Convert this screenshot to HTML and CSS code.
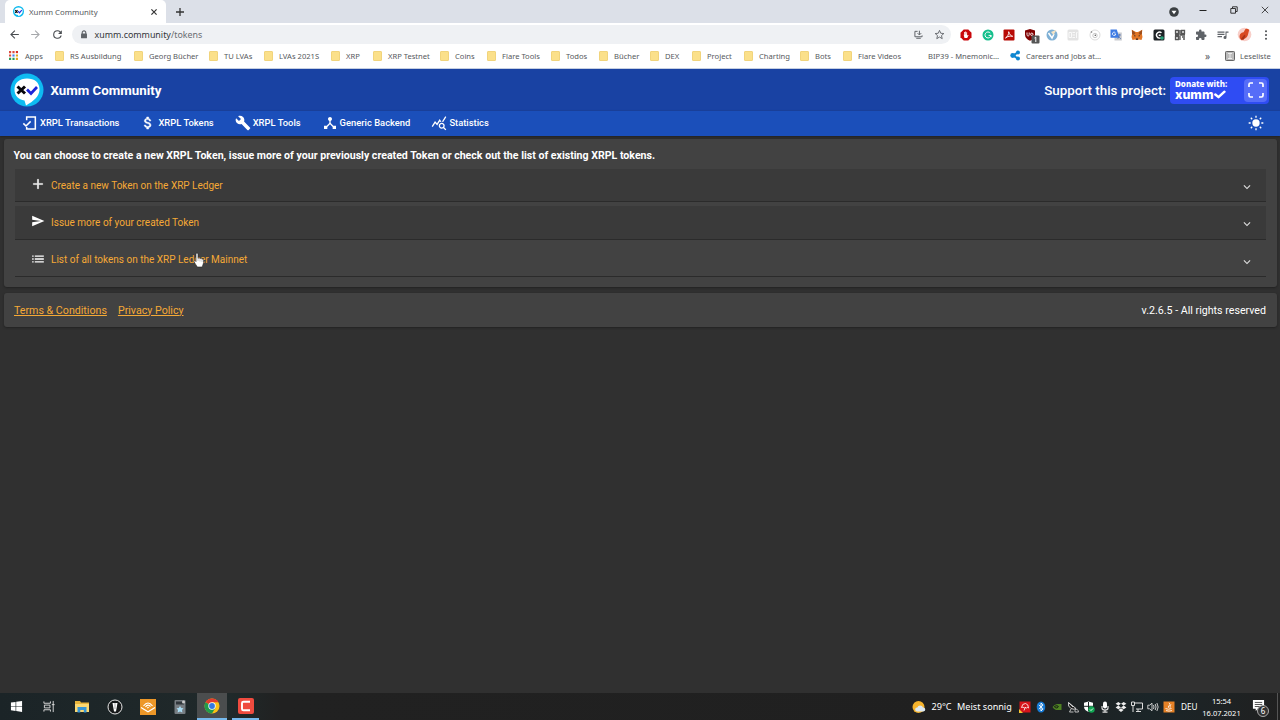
FILE: index.html
```html
<!DOCTYPE html>
<html lang="de">
<head>
    <meta charset="UTF-8">
    <meta name="viewport" content="width=device-width, initial-scale=1.0">
    <title>Xumm Community</title>
    <link rel="stylesheet" href="styles.css">
</head>
<body>
    <div class="tab-strip">
        <div class="tab">
            <svg class="favicon" viewBox="0 0 34 34"><circle cx="17" cy="17" r="17" fill="#0cb9ee"/><path d="M17 5c8 0 13 4 13 11 0 8-6 12-14 16v-4C9 27 4 24 4 16 4 9 9 5 17 5z" fill="#fff"/><path d="M7 13l7 8m0-8l-7 8" stroke="#000" stroke-width="3.5"/><path d="M16 16l4 5 7-8" fill="none" stroke="#1a2be0" stroke-width="3.5"/></svg>
            <span class="tab-title">Xumm Community</span>
            <svg class="tab-close" viewBox="0 0 8 8"><path d="M1.4 1.4l5.2 5.2m0-5.2L1.4 6.6" stroke="#333" stroke-width="1.2"/></svg>
        </div>
        <svg class="new-tab" viewBox="0 0 8 8"><path d="M4 0v8M0 4h8" stroke="#333" stroke-width="1.3"/></svg>
        <div class="window-controls">
            <svg class="update-dot" viewBox="0 0 10 10"><circle cx="5" cy="5" r="4.8" fill="#3c4043"/><path d="M2.5 3.7h5L5 7.3z" fill="#fff"/></svg>
            <svg viewBox="0 0 8 8"><path d="M.5 4.5h7" stroke="#222"/></svg>
            <svg viewBox="0 0 8 8"><path d="M2.5 2V.8h4.7v4.7H6M.8 2.5h4.7v4.7H.8z" fill="none" stroke="#222" stroke-width=".9"/></svg>
            <svg viewBox="0 0 8 8"><path d="M.8.8l6.4 6.4m0-6.400L.8 7.2" stroke="#222" stroke-width=".8"/></svg>
        </div>
    </div>

    <div class="toolbar">
        <div class="nav-buttons">
            <svg viewBox="0 0 24 24" fill="#4a4d51"><path d="M20 11H7.830l5.590-5.590L12 4l-8 8 8 8 1.410-1.410L7.830 13H20v-2z"/></svg>
            <svg viewBox="0 0 24 24" fill="#a6a8ab"><path d="M12 4l-1.410 1.410L16.170 11H4v2h12.170l-5.580 5.590L12 20l8-8z"/></svg>
            <svg viewBox="0 0 24 24" fill="#4a4d51"><path d="M17.650 6.350A7.960 7.960 0 0 0 12 4a8 8 0 1 0 7.730 10h-2.080A6 6 0 1 1 12 6c1.660 0 3.140.69 4.220 1.780L13 11h7V4l-2.350 2.350z"/></svg>
        </div>
        <div class="address">
            <svg class="lock" viewBox="0 0 8 10"><path d="M2 4.500V3a2 2 0 0 1 4 0v1.500" fill="none" stroke="#5f6368" stroke-width="1.2"/><rect x=".7" y="4" width="6.6" height="5.3" rx=".8" fill="#5f6368"/></svg>
            <span class="url">xumm.community<span class="url-path">/tokens</span></span>
            <svg class="install" viewBox="0 0 10 10" fill="none" stroke="#5f6368" stroke-width="1.1"><path d="M4 1.500H1v6h8V6M2.500 9.200h5M6 .8v4.500M4 3.500l2 2 2-2"/></svg>
            <svg class="star" viewBox="0 0 24 24"><path d="M12 3l2.700 6.300 6.800.6-5.200 4.500 1.600 6.700-5.900-3.600-5.900 3.600 1.600-6.700L2.500 9.900l6.800-.6z" fill="none" stroke="#5f6368" stroke-width="2"/></svg>
        </div>
        <div class="extensions">
            <svg viewBox="0 0 12 12"><path d="M3.700.5h4.600l3.200 3.200v4.600l-3.200 3.200H3.700L.5 8.300V3.700z" fill="#c9060b"/><path d="M3.600 5.500l.9 3.600h2.700l1.400-3-.8-.2-.7.8V3.200h-.8v2.200h-.2V2.600h-.9v2.800H5V3h-.8v3z" fill="#fff"/></svg>
            <svg viewBox="0 0 12 12"><circle cx="6" cy="6" r="5.5" fill="#15bf8c"/><path d="M8.300 4A3 3 0 1 0 9 6.400H6.600M9 6.200v2" fill="none" stroke="#fff"/></svg>
            <svg viewBox="0 0 12 12"><rect x=".5" y=".5" width="11" height="11" rx="1" fill="#b80a05"/><path d="M2.500 9C4.500 8 6 5 5.700 2.700c1 3 2 4.200 4 4.600C7.500 6.700 4.500 7.300 2.500 9z" fill="none" stroke="#fff" stroke-width=".9"/></svg>
            <svg class="ublock" viewBox="0 0 16 16"><path d="M6 1l5 1.500v4.200c0 3-2 4.600-5 6-3-1.400-5-3-5-6V2.500z" fill="#800000"/><path d="M3 4.500v2c0 2 2.200 2 2.200 0v-2" fill="none" stroke="#fff" stroke-width=".9"/><circle cx="7.8" cy="6.3" r="1.2" fill="none" stroke="#fff" stroke-width=".9"/><rect x="7.5" y="7.5" width="8" height="8" rx="1" fill="#555"/><path d="M10.500 10l1.300-.8V14" fill="none" stroke="#fff" stroke-width="1"/></svg>
            <svg viewBox="0 0 12 12"><circle cx="6" cy="6" r="5.5" fill="#7eb0d5"/><path d="M2.500 4l3.500 5 2-4" fill="none" stroke="#fff" stroke-width="1.5"/><path d="M5 3l5.500-2.200-3 5.200z" fill="#f5e4c5"/></svg>
            <svg viewBox="0 0 12 12"><rect x=".5" y=".5" width="11" height="11" rx="1.5" fill="#e3e3e3"/><path d="M2 3.500h2.500v5H2zM5.500 3.500H8M5.500 6H8M5.500 8.500H8M9.500 9V3.500h1" fill="none" stroke="#f9f9f9"/></svg>
            <svg viewBox="0 0 12 12"><circle cx="6" cy="6" r="5" fill="none" stroke="#dcdcdc"/><circle cx="6" cy="6.5" r="2.2" fill="none" stroke="#bbb" stroke-width=".8"/><circle cx="2.5" cy="3" r=".8" fill="#777"/><circle cx="6.3" cy="6.3" r=".8" fill="#555"/></svg>
            <svg viewBox="0 0 12 12"><rect x="4.5" y="3.5" width="7.3" height="8" fill="#c9cbd0"/><path d="M.5.500h6.300l2.500 8.300H.5z" fill="#3e7be3"/><path d="M5.400 3.700A1.700 1.700 0 1 0 5.800 5H4.300" fill="none" stroke="#fff" stroke-width=".8"/><path d="M8 6h3M9.500 5c0 2-1 4-2 5m1-3q1 2 2.500 3" fill="none" stroke="#4c71b5" stroke-width=".7"/></svg>
            <svg viewBox="0 0 12 12"><path d="M.7.700L5 3h2l4.300-2.300-.4 4.300.6 3-1 3-2.500-.6L6.800 11H5.200L4 10.400l-2.500.6-1-3L1.100 5z" fill="#e27625"/><path d="M3 6l2 1-1.500.6zM9 6L7 7l1.500.6zM5 9.500h2v1.200H5z" fill="#342a28"/><path d="M1 1l3.500 3L3 6 1.100 5zM11 1L7.500 4 9 6l1.900-1z" fill="#9c4d1b"/></svg>
            <svg viewBox="0 0 12 12"><rect x=".5" y=".5" width="11" height="11" rx="1.5" fill="#1e2226"/><path d="M8.500 3.800a3 3 0 1 0-.8 5M5.700 6.200h2" fill="none" stroke="#fff" stroke-width="1.4"/><circle cx="9" cy="9" r="1.8" fill="#26a078"/></svg>
            <svg viewBox="0 0 12 12"><path d="M1.500 1.500h3v3h-3zM7.500 1.500h3v3h-3zM1.500 7.500h3v3h-3zM6 1v5h5M6 7v4M8 8h3M9 10h2M1 6h4" fill="none" stroke="#555" stroke-width="1.3"/></svg>
            <svg viewBox="0 0 24 24" fill="#5f6368"><path d="M20.500 11H19V7c0-1.100-.9-2-2-2h-4V3.500a2.500 2.500 0 0 0-5 0V5H4c-1.100 0-2 .9-2 2v3.800h1.500a2.700 2.700 0 0 1 0 5.400H2V20c0 1.100.9 2 2 2h3.800v-1.500a2.700 2.700 0 0 1 5.400 0V22H17c1.100 0 2-.9 2-2v-4h1.500a2.500 2.500 0 0 0 0-5z"/></svg>
            <svg viewBox="0 0 24 24" fill="#5f6368"><path d="M15 5H1v2.300h14V5zm0 4.500H1v2.300h14V9.500zM1 16.300h9V14H1v2.300zM17 5v9.200a3 3 0 1 0 2 2.800V7.300h4V5h-6z"/></svg>
            <svg class="profile" viewBox="0 0 16 16"><circle cx="8" cy="8" r="7.3" fill="#f8cfc9"/><path d="M3 12c-1-4 1-6 4-6.500l2-3.500q2-.5 4 .8L12 7c-.5 3-2 5-4 5.500L5 14z" fill="#d94a22"/><path d="M4 13l4-5 1 1.500-2 4z" fill="#a83217"/></svg>
            <svg viewBox="0 0 12 12" fill="#4a4d51"><circle cx="6" cy="2.3" r="1"/><circle cx="6" cy="6" r="1"/><circle cx="6" cy="9.7" r="1"/></svg>
        </div>
    </div>

    <div class="bookmarks">
        <div class="bookmark apps"><svg viewBox="0 0 10 10"><path d="M0 0h2.400v2.400H0zM3.800 0h2.400v2.400H3.800zM0 3.800h2.400v2.400H0z" fill="#dd4b3e"/><path d="M7.600 0H10v2.400H7.600z" fill="#d93025"/><path d="M3.800 3.800h2.400v2.400H3.800z" fill="#4285f4"/><path d="M7.600 3.800H10v2.400H7.600zM7.600 7.600H10V10H7.600z" fill="#e2a81c"/><path d="M0 7.600h2.400V10H0zM3.800 7.600h2.400V10H3.800z" fill="#2e9d57"/></svg>Apps</div>
        <div class="bookmark"><i class="folder"></i>RS Ausbildung</div>
        <div class="bookmark"><i class="folder"></i>Georg Bücher</div>
        <div class="bookmark"><i class="folder"></i>TU LVAs</div>
        <div class="bookmark"><i class="folder"></i>LVAs 2021S</div>
        <div class="bookmark"><i class="folder"></i>XRP</div>
        <div class="bookmark"><i class="folder"></i>XRP Testnet</div>
        <div class="bookmark"><i class="folder"></i>Coins</div>
        <div class="bookmark"><i class="folder"></i>Flare Tools</div>
        <div class="bookmark"><i class="folder"></i>Todos</div>
        <div class="bookmark"><i class="folder"></i>Bücher</div>
        <div class="bookmark"><i class="folder"></i>DEX</div>
        <div class="bookmark"><i class="folder"></i>Project</div>
        <div class="bookmark"><i class="folder"></i>Charting</div>
        <div class="bookmark"><i class="folder"></i>Bots</div>
        <div class="bookmark"><i class="folder"></i>Flare Videos</div>
        <div class="bookmark">BIP39 - Mnemonic...</div>
        <div class="bookmark"><svg class="ripple" viewBox="0 0 12 12" fill="#0f87d1"><circle cx="3" cy="6" r="2.7"/><circle cx="8.7" cy="2.7" r="2.2"/><circle cx="8.7" cy="9.3" r="2.2"/><path d="M3 5l5-3v2L6 6l2 2v2L3 7z"/></svg>Careers and Jobs at...</div>
        <div class="bookmark more">»</div>
        <div class="bookmark reading"><svg viewBox="0 0 10 10"><rect x=".5" y=".5" width="9" height="9" rx=".8" fill="#bbb" stroke="#666"/><path d="M3 2.500h4M3 7.500h4M5 2.500v5" stroke="#f2f2f2" stroke-width=".9"/></svg>Leseliste</div>
    </div>

    <header class="site-header">
        <svg class="logo" viewBox="0 0 34 34"><circle cx="17" cy="17" r="16.5" fill="#0ebbf2"/><path d="M17 5.500c7.500 0 12.500 4 12.500 10.700 0 7.300-6 11.800-13.500 16.300l-1.500-5C8.500 26.500 4.500 23 4.500 16.500 4.500 9.500 9.500 5.500 17 5.500z" fill="#fff"/><path d="M7.500 13.500l7.500 7m0-7l-7.500 7" stroke="#05050c" stroke-width="3"/><path d="M17 16.500l4 4 6-6.500" fill="none" stroke="#1c25d8" stroke-width="2.7"/></svg>
        <h1>Xumm Community</h1>
        <span class="support">Support this project:</span>
        <a class="donate">
            <span class="donate-text">
                <span class="donate-label">Donate with:</span>
                <span class="donate-brand">xumm<svg viewBox="0 0 12 9"><path d="M1.300 4.500l3.200 2.700 6-5.500" fill="none" stroke="#fff" stroke-width="2.4" stroke-linecap="round" stroke-linejoin="round"/></svg></span>
            </span>
            <span class="scan"><svg viewBox="0 0 16 16"><path d="M1 5V2.500Q1 1 2.500 1H5M11 1h2.500Q15 1 15 2.500V5M15 11v2.500q0 1.500-1.500 1.500H11M5 15H2.500Q1 15 1 13.500V11" fill="none" stroke="#fff" stroke-width="1.7"/></svg></span>
        </a>
    </header>

    <nav class="site-nav">
        <a><svg viewBox="0 0 24 24"><path d="M7 8V3h13v18H7v-3M2 12.500l4 4 7-7" fill="none" stroke="#fff" stroke-width="2.3"/></svg>XRPL Transactions</a>
        <a><svg viewBox="0 0 24 24"><path d="M11.800 10.900c-2.270-.59-3-1.200-3-2.150 0-1.090 1.010-1.850 2.700-1.850 1.780 0 2.440.85 2.500 2.100h2.210c-.07-1.720-1.120-3.300-3.210-3.810V3h-3v2.160c-1.940.42-3.500 1.680-3.500 3.610 0 2.310 1.910 3.460 4.700 4.130 2.500.6 3 1.480 3 2.410 0 .69-.49 1.790-2.700 1.790-2.060 0-2.870-.92-2.980-2.100h-2.200c.12 2.190 1.760 3.420 3.680 3.830V21h3v-2.150c1.950-.37 3.500-1.500 3.500-3.550 0-2.840-2.430-3.810-4.700-4.400z" stroke="#fff" stroke-width=".7"/></svg>XRPL Tokens</a>
        <a><svg viewBox="0 0 24 24"><path d="M22.700 19l-9.100-9.100c.9-2.300.4-5-1.500-6.900-2-2-5-2.400-7.400-1.300L9 6 6 9 1.600 4.700C.4 7.100.9 10.100 2.900 12.100c1.900 1.900 4.600 2.400 6.900 1.500l9.100 9.100c.4.400 1 .4 1.400 0l2.300-2.300c.5-.4.5-1.100.1-1.400z"/></svg>XRPL Tools</a>
        <a><svg viewBox="0 0 24 24"><path d="M17 16l-4-4V8.820C14.160 8.400 15 7.300 15 6c0-1.660-1.340-3-3-3S9 4.340 9 6c0 1.300.84 2.400 2 2.820V12l-4 4H3v5h5v-3.050l4-4.200 4 4.200V21h5v-5h-4z"/></svg>Generic Backend</a>
        <a><svg viewBox="0 0 24 24"><path d="M19.880 18.470c.44-.7.7-1.510.7-2.390 0-2.490-2.010-4.500-4.500-4.500s-4.500 2.010-4.500 4.500 2.010 4.500 4.490 4.500c.88 0 1.700-.26 2.390-.7L21.580 23 23 21.580l-3.120-3.110zm-3.800.11c-1.380 0-2.500-1.120-2.500-2.500s1.120-2.500 2.500-2.500 2.500 1.120 2.500 2.500-1.120 2.500-2.500 2.500zm-.36-8.500c-.74.02-1.450.18-2.100.45l-.55-.83-3.800 6.180-3.010-3.520-3.630 5.810L1 17l5-8 3 3.500L13 6l2.720 4.080zm2.590.5c-.64-.28-1.330-.45-2.050-.49L21.380 2 23 3.180l-4.690 7.400z"/></svg>Statistics</a>
        <svg class="theme-toggle" viewBox="0 0 24 24"><circle cx="12" cy="12" r="5.5"/><path d="M12 1v3M12 20v3M1 12h3M20 12h3M4.200 4.200l2.100 2.100M17.700 17.700l2.100 2.100M19.800 4.200l-2.100 2.100M6.300 17.700l-2.100 2.100" stroke="#fff" stroke-width="2"/></svg>
    </nav>

    <main class="page">
        <section class="card">
            <h2>You can choose to create a new XRPL Token, issue more of your previously created Token or check out the list of existing XRPL tokens.</h2>
            <div class="panel">
                <svg viewBox="0 0 24 24"><path d="M20 13h-7v7h-2v-7H4v-2h7V4h2v7h7v2z" stroke="#fff" stroke-width=".8"/></svg>
                <span>Create a new Token on the XRP Ledger</span>
                <svg class="chevron" viewBox="0 0 24 24"><path d="M16.590 8.590L12 13.170 7.410 8.590 6 10l6 6 6-6z"/></svg>
            </div>
            <div class="panel">
                <svg viewBox="0 0 24 24"><path d="M2.010 21L23 12 2.010 3 2 10l15 2-15 2z"/></svg>
                <span>Issue more of your created Token</span>
                <svg class="chevron" viewBox="0 0 24 24"><path d="M16.590 8.590L12 13.170 7.410 8.590 6 10l6 6 6-6z"/></svg>
            </div>
            <div class="panel active">
                <svg viewBox="0 0 24 24"><path d="M2 13.200h2.500v-2.400H2v2.400zm0 5h2.500v-2.400H2v2.400zm0-10h2.500V5.800H2v2.400zm4.500 5H22v-2.400H6.500v2.400zm0 5H22v-2.400H6.500v2.400zm0-12.400v2.400H22V5.800H6.500z"/></svg>
                <span>List of all tokens on the XRP Ledger Mainnet</span>
                <svg class="chevron" viewBox="0 0 24 24"><path d="M16.590 8.590L12 13.170 7.410 8.590 6 10l6 6 6-6z"/></svg>
                <svg class="cursor" viewBox="0 0 12 16"><path d="M3 1.500Q4.500.2 5 2v4.200q1.300-.8 2 .3 1.300-.5 1.900.5 1.700-.4 1.700 1.300v2.500L9.200 15H4.300L1 9.800Q.8 8.300 2.200 8.700l.8.900z" fill="#fff" stroke="#222" stroke-width=".6"/><path d="M5 6v3M7 7v2.500M9 7.500V10" stroke="#777" stroke-width=".4"/></svg>
            </div>
        </section>
        <footer class="card site-footer">
            <a>Terms &amp; Conditions</a>
            <a>Privacy Policy</a>
            <span>v.2.6.5 - All rights reserved</span>
        </footer>
    </main>

    <div class="taskbar">
        <div class="task"><svg viewBox="0 0 14 14" fill="#fff"><path d="M1 2.800l5-.7v4.500H1zM6.700 2l6.300-.9v5.500H6.700zM1 7.300h5v4.500l-5-.7zM6.700 7.300H13v5.500l-6.300-.9z"/></svg></div>
        <div class="task"><svg viewBox="0 0 14 14" fill="none" stroke="#ddd"><path d="M1 1.500v2h7v-2M1 12.500v-2h7v2M1.500 5.500h6v3h-6zM11 1v12M9.500 5h3"/></svg></div>
        <div class="task"><svg class="wide" viewBox="0 0 16 14"><path d="M1 1h5l1 1.500h8V12H1z" fill="#e8b43c"/><path d="M1 4h14v8H1z" fill="#fbd872"/><path d="M3.500 7h9v5.500h-2.700V10H6.300v2.500H3.500z" fill="#3795d5"/></svg></div>
        <div class="task"><svg class="wide" viewBox="0 0 16 16"><circle cx="8" cy="8" r="7" fill="#17191a" stroke="#e5e5e5"/><path d="M5.500 4h5L9 12.500H7z" fill="#fff"/><path d="M8 4v6" stroke="#888" stroke-width=".7"/></svg></div>
        <div class="task"><svg class="wide" viewBox="0 0 16 16"><path d="M0 0h16v16H0z" fill="#ed9728"/><path d="M1 8.500l7 4.300 7-4.300M3.500 7Q8 1 12.500 7M5.500 8Q8 4.500 10.500 7.500M7.200 9l1.500-.7" fill="none" stroke="#fff" stroke-width="1.2"/></svg></div>
        <div class="task"><svg class="wide" viewBox="0 0 14 16"><rect x="1.5" y="1" width="11" height="14" rx="1" fill="#777d82"/><path d="M3 2.500h8v3H3z" fill="#30363b"/><circle cx="10.5" cy="3" r="1.5" fill="#ccc"/><path d="M7 7l1.200 2 2.300.3-1.500 1.700.4 2.500L7 12.500l-2.400 1 .4-2.500-1.500-1.700L5.800 9z" fill="#a9dcf3"/></svg></div>
        <div class="task current"><svg class="wide" viewBox="0 0 16 16"><circle cx="8" cy="8" r="7.5" fill="#fbc116"/><path d="M8 8L1.500 4.250A7.500 7.500 0 0 1 14.500 4.250H8z" fill="#e33b2e"/><path d="M1.500 4.250A7.500 7.500 0 0 0 8 15.500l3.300-5.600L8 8z" fill="#229a4b"/><circle cx="8" cy="8" r="3.7" fill="#fff"/><circle cx="8" cy="8" r="2.9" fill="#3479e2"/></svg></div>
        <div class="task running"><svg class="wide" viewBox="0 0 16 16"><rect width="16" height="16" rx="2" fill="#ef4b3f"/><path d="M12 3.700H5.500Q4 3.700 4 5v6q0 1.300 1.500 1.300H12" fill="none" stroke="#fff" stroke-width="1.9"/></svg></div>
        <div class="weather"><svg viewBox="0 0 14 14"><circle cx="6.5" cy="7" r="6" fill="#f5b32c"/><path d="M5 11.500a2 2 0 0 1 .3-4 3 3 0 0 1 5.700 0 2 2 0 0 1 .5 4z" fill="#dce8ef"/></svg><span>29°C</span><span>Meist sonnig</span></div>
        <div class="tray">
            <svg viewBox="0 0 12 12"><path d="M.5.500h11v11H.5z" fill="#d7141a"/><path d="M2.500 6.500Q3 2.500 6.500 2.500q3 .5 3 4.500Q8.500 6 7.500 7 6.500 6 5.500 7 4 5.500 2.500 6.500z" fill="none" stroke="#fff" stroke-width=".8"/><path d="M6.500 6l-1.500 3.500" stroke="#fff" stroke-width=".8"/><path d="M0 12V8l4 4z" fill="#f6c632"/></svg>
            <svg viewBox="0 0 12 12"><ellipse cx="6" cy="6" rx="4.3" ry="5.5" fill="#1679d3"/><path d="M3.800 3.900l4.300 4L6 10V2l2.100 2-4.300 4" fill="none" stroke="#fff" stroke-width=".9"/></svg>
            <svg viewBox="0 0 12 12"><path d="M1.500 6q2-2.500 4.500-3h4.500v6H5Q2.500 8 1.500 6z" fill="#4f8223"/><path d="M3 6q2-2 4-1 1 1-1 2-2 0-2-1" fill="none" stroke="#182313"/></svg>
            <svg viewBox="0 0 12 12"><path d="M1.500 1.500q-1 4 2.500 6 3 1.500 5 0zM1.500 1.500L6 6" fill="#222" stroke="#ddd" stroke-width=".9"/><path d="M4 8l-1.500 3h4M8 8.500q3-1 3.500 2.500H8z" fill="none" stroke="#bbb"/></svg>
            <svg viewBox="0 0 12 12"><path d="M5.500.5l4.500 1.300v4c0 2.700-2 4-4.500 5.200C3 9.800 1 8.500 1 5.800v-4z" fill="#fff"/><path d="M5.500 1v9.500M1 5.300h9" stroke="#1d2425"/><circle cx="8.5" cy="8.5" r="3.2" fill="#11a653"/><path d="M7 8.500l1 1 2-2" fill="none" stroke="#fff" stroke-width=".9"/></svg>
            <svg viewBox="0 0 12 12"><rect x="4" y=".5" width="4" height="7" rx="2" fill="#fff"/><path d="M3 5v2q0 2 3 2t3-2V5M6 9v2.500M3.500 11.200h5" fill="none" stroke="#ddd" stroke-width="1.2"/></svg>
            <svg viewBox="0 0 12 12"><path d="M3.300 1L6 2.800 3.300 4.600.6 2.800zM8.700 1l2.700 1.800-2.700 1.800L6 2.800zM3.300 4.600L6 6.400 3.300 8.200.6 6.400zM8.700 4.600l2.700 1.800-2.700 1.800L6 6.400zM6 7.300l2.600 1.800L6 10.900 3.400 9.100z" fill="#eee"/></svg>
            <svg viewBox="0 0 12 12" fill="none" stroke="#ddd"><path d="M4 2h7.500v6H5M7 8v2.500M5 10.500h5M.5 1h3v3.500h-3zM2 4.500v6.500"/></svg>
            <svg viewBox="0 0 12 12" fill="none" stroke="#ddd" stroke-width=".9"><path d="M.8 4.200h1.800l2.400-2v7.600l-2.400-2H.8zM6.500 4q1 2 0 4M8.200 3q1.700 3 0 6M9.900 2q2.500 4 0 8"/></svg>
            <svg viewBox="0 0 12 12"><path d="M.5.500h11v11H.5z" fill="#e58126"/><path d="M6 1.800q2 1.500 0 3T6.500 7M8 3.500Q6 5 7.500 6.500M2.500 7.500q3 1.500 6 0M3 9.500q3 1.300 6 0" fill="none" stroke="#fff" stroke-width=".8"/></svg>
        </div>
        <span class="language">DEU</span>
        <div class="clock"><span>15:54</span><span>16.07.2021</span></div>
        <div class="notifications"><svg viewBox="0 0 14 14"><path d="M1 1h12v9.500H6.500L4 13v-2.500H1z" fill="#fff"/><path d="M3 3.700h8M3 5.900h8M3 8.100h6" stroke="#333" stroke-width=".9"/></svg><b>6</b></div>
    </div>
</body>
</html>
```
FILE: styles.css
```css
* {
    box-sizing: border-box;
}
body {
    margin: 0;
    width: 1280px;
    height: 720px;
    overflow: hidden;
    display: flex;
    flex-direction: column;
    background-color: #303030;
    color: #ffffff;
    font-family: Roboto, sans-serif;
    white-space: nowrap;
}
svg {
    display: block;
    flex: none;
}

/* Browser window */
.tab-strip, .toolbar, .bookmarks {
    flex: none;
    font-family: "Noto Sans", sans-serif;
    font-size: 7.6px;
    color: #55585c;
}
.tab-strip {
    height: 23px;
    display: flex;
    align-items: center;
    padding-left: 5px;
    background-color: #dce0e8;
}
.tab {
    width: 161px;
    height: 23px;
    padding: 0 8px 0 8px;
    display: flex;
    align-items: center;
    background-color: #ffffff;
    border-radius: 5px 5px 0 0;
}
.favicon {
    width: 11px;
    height: 11px;
}
.tab-title {
    margin-left: 5px;
    flex: 1;
    font-size: 7.8px;
}
.tab-close {
    width: 8px;
    height: 8px;
}
.new-tab {
    width: 8px;
    height: 8px;
    margin-left: 10px;
}
.window-controls {
    margin-left: auto;
    display: flex;
    align-items: center;
    gap: 23px;
    padding: 0 11px 4px 0;
}
.window-controls svg {
    width: 8px;
    height: 8px;
}
.window-controls .update-dot {
    width: 10px;
    height: 10px;
    margin: 4px -3px 0 0;
}
.toolbar {
    height: 23px;
    display: flex;
    align-items: center;
    background-color: #ffffff;
}
.nav-buttons {
    width: 72px;
    padding-left: 8px;
    display: flex;
    gap: 8.3px;
}
.nav-buttons svg {
    width: 13px;
    height: 13px;
}
.address {
    width: 879px;
    height: 19px;
    padding: 0 6px 0 8px;
    display: flex;
    align-items: center;
    background-color: #eff1f4;
    border-radius: 10px;
}
.lock {
    width: 8px;
    height: 9px;
}
.url {
    margin-left: 6.5px;
    flex: 1;
    font-size: 8.9px;
    color: #333639;
}
.url-path {
    color: #6a6d71;
}
.install {
    width: 9px;
    height: 9px;
}
.star {
    width: 11px;
    height: 11px;
    margin-left: 11px;
}
.extensions {
    display: grid;
    grid-template-columns: repeat(15, 21.4px);
    justify-items: center;
    align-items: center;
    margin-left: 4.5px;
}
.extensions svg {
    width: 12px;
    height: 12px;
}
.extensions .ublock {
    width: 16px;
    height: 16px;
    margin: 3px 0 0 3px;
}
.extensions .profile {
    width: 15px;
    height: 15px;
}
.bookmarks {
    height: 23px;
    padding: 0 0 3px 9px;
    display: grid;
    grid-template-columns: 46px 79px 75px 55px 67px 42px 67px 47px 64px 48px 51px 42px 52px 56px 43px 85px 82px 195px 18px 1fr;
    align-items: center;
    background-color: #ffffff;
    border-bottom: 1px solid #c5cfe2;
}
.bookmark {
    display: flex;
    align-items: center;
}
.folder {
    width: 9px;
    height: 10px;
    margin-right: 6px;
    background-color: #fbe08a;
    border: 1px solid #f1d47c;
    border-radius: 1px;
}
.apps svg {
    width: 9px;
    height: 9px;
    margin-right: 7px;
}
.ripple {
    width: 11px;
    height: 11px;
    margin-right: 5px;
}
.more {
    font-size: 10px;
}
.reading {
    height: 11px;
    padding-left: 1px;
}
.reading svg {
    width: 10px;
    height: 10px;
    margin: 0 5px 0 1px;
}

/* Xumm site */
.site-header {
    flex: none;
    height: 42px;
    display: flex;
    align-items: center;
    padding: 0 11px 0 10px;
    background-color: #1942a3;
}
.logo {
    width: 34px;
    height: 34px;
}
.site-header h1 {
    margin: 0 auto 0 6.5px;
    font-size: 13.3px;
    font-weight: 700;
}
.support {
    font-size: 13.4px;
    font-weight: 500;
}
.donate {
    width: 99px;
    height: 27px;
    margin-left: 4px;
    padding: 2px;
    display: flex;
    justify-content: space-between;
    background-color: #2f4cf3;
    border-radius: 4px;
}
.donate-text {
    display: flex;
    flex-direction: column;
    padding-left: 3px;
    font-family: "Noto Sans", sans-serif;
    font-weight: 800;
}
.donate-label {
    font-size: 8px;
    line-height: 9px;
}
.donate-brand {
    display: flex;
    align-items: center;
    font-family: Inter, sans-serif;
    font-size: 12.5px;
    line-height: 13px;
}
.donate-brand svg {
    width: 12px;
    height: 9px;
    margin-top: 1px;
}
.scan {
    width: 23px;
    height: 23px;
    display: grid;
    place-items: center;
    background-color: #566df8;
    border-radius: 4px;
}
.scan svg {
    width: 16px;
    height: 16px;
}
.site-nav {
    flex: none;
    height: 25px;
    padding: 0 16px 2px 22px;
    display: flex;
    align-items: center;
    gap: 21px;
    background-color: #1b4fba;
    box-shadow: 0 1px 2px #222222;
    z-index: 1;
}
.site-nav a {
    display: flex;
    align-items: center;
    gap: 2px;
    font-size: 9.4px;
    font-weight: 500;
}
.site-nav svg {
    width: 16px;
    height: 16px;
    fill: #ffffff;
}
.site-nav .theme-toggle {
    margin-left: auto;
}
.page {
    flex: 1;
    padding: 3px 3px 0 4px;
    display: flex;
    flex-direction: column;
    gap: 6px;
}
.card {
    background-color: #424242;
    border-radius: 3px;
    box-shadow: 0 1px 2px #222222;
}
section.card {
    height: 148px;
    padding: 10px 11px 0 9.5px;
    display: flex;
    flex-direction: column;
    gap: 4px;
}
.card h2 {
    margin: 0 0 3px;
    height: 13px;
    font-size: 10.6px;
    line-height: 13px;
    font-weight: 700;
}
.panel {
    position: relative;
    height: 33.3px;
    margin-left: 1.5px;
    padding: 0 12px 0 16px;
    display: flex;
    align-items: center;
    background-color: #3a3a3a;
    border-bottom: 1px solid #2b2b2b;
    font-size: 10px;
    color: #f5a936;
}
.panel.active {
    background-color: #424242;
}
.panel svg {
    width: 14px;
    height: 14px;
    margin: -2px 6px 0 0;
    fill: #ffffff;
}
.panel .chevron {
    width: 14px;
    height: 14px;
    margin: 4px 0 0 auto;
    fill: #dddddd;
}
.panel .cursor {
    position: absolute;
    left: 178px;
    top: 8px;
    width: 12px;
    height: 16px;
    margin: 0;
}
.site-footer {
    height: 34px;
    padding: 0 11px 0 10px;
    display: flex;
    align-items: center;
    gap: 11px;
    font-size: 10.67px;
}
.site-footer a {
    color: #f5a936;
    text-decoration: underline;
}
.site-footer span {
    margin-left: auto;
}

/* Windows taskbar */
.taskbar {
    flex: none;
    height: 27px;
    display: flex;
    align-items: center;
    background: linear-gradient(90deg, #1b2427, #20292a 18%, #212121 22%, #202020 78%, #1b2528 90%, #202020);
    font-family: "Noto Sans", sans-serif;
    font-size: 9.1px;
}
.task {
    width: 32.8px;
    height: 27px;
    display: grid;
    place-items: center;
}
.task svg {
    width: 13px;
    height: 13px;
}
.task .wide {
    width: 16px;
    height: 16px;
}
.task.current, .task.running {
    width: 29.5px;
    margin-right: 3.2px;
    border-bottom: 2px solid #76b9ed;
}
.task.current {
    margin-left: 0.7px;
    background-color: #4b4d4e;
}
.task.running {
    width: 27px;
    margin-left: 2px;
}
.weather {
    width: 105.5px;
    margin-left: auto;
    display: flex;
    align-items: center;
}
.weather svg {
    width: 14px;
    height: 14px;
    margin-right: 6px;
}
.weather span {
    margin-right: 5.5px;
}
.tray {
    display: grid;
    grid-template-columns: repeat(10, 16px);
    justify-items: center;
}
.tray svg {
    width: 12px;
    height: 12px;
}
.language {
    width: 15px;
    margin-left: 4px;
    font-size: 8.2px;
}
.clock {
    width: 37px;
    margin-left: 7px;
    display: flex;
    flex-direction: column;
    align-items: center;
    font-size: 7.5px;
    line-height: 12px;
}
.notifications {
    width: 26px;
    height: 27px;
    margin: 0 2px 0 12px;
    padding-top: 6px;
    position: relative;
    border-right: 1px solid #555555;
}
.notifications svg {
    width: 13px;
    height: 13px;
}
.notifications b {
    position: absolute;
    left: 5px;
    top: 12px;
    width: 12px;
    height: 12px;
    border: 1px solid #aaaaaa;
    border-radius: 50%;
    background-color: #333333;
    font-size: 8px;
    line-height: 10px;
    font-weight: 400;
    text-align: center;
}
```
